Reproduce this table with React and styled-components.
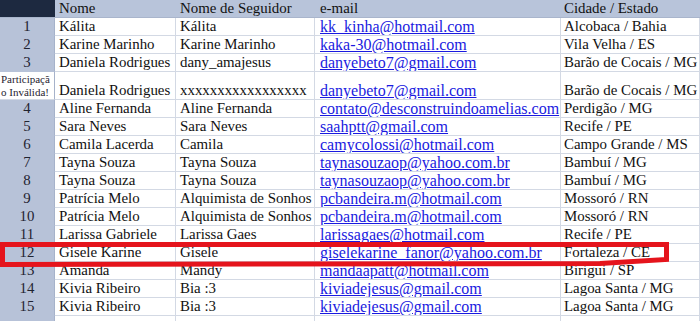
import React from "react";
import styled, { createGlobalStyle } from "styled-components";

const GlobalStyle = createGlobalStyle`
  html, body { margin: 0; padding: 0; background: #ffffff; }
  body { font-family: "Liberation Serif", "DejaVu Serif", serif; }
`;

const Sheet = styled.div`
  position: relative;
  width: 700px;
  height: 321px;
  overflow: hidden;
  display: grid;
  grid-template-columns: 55px 121px 139px 246px 139px;
  grid-template-rows: 18px 18px 18px 18px 28px;
  grid-auto-rows: 18px;
  font-family: "Liberation Serif", "DejaVu Serif", serif;
  font-size: 14.9px;
  color: #111111;
  background: #ffffff;
`;

const Corner = styled.div`
  background: #1d2940;
  border-bottom: 1px solid #a9b5cc;
  box-sizing: border-box;
`;

const HeadCell = styled.div`
  background: #b8c4da;
  border-bottom: 1px solid #a9b5cc;
  box-sizing: border-box;
  display: flex;
  align-items: flex-end;
  padding: 0 0 0 ${(p) => p.$pad || 4}px;
  line-height: 17px;
  white-space: nowrap;
  overflow: hidden;
`;

const IndexCell = styled.div`
  background: ${(p) => (p.$note ? "#ffffff" : "#b7c2d8")};
  border-bottom: 1px solid ${(p) => (p.$note ? "#d3d9e4" : "#b7c2d8")};
  border-right: 1px solid #a6b2ca;
  box-sizing: border-box;
  display: flex;
  align-items: flex-end;
  justify-content: center;
  line-height: 17px;
  color: #1f2330;
  height: ${(p) => p.$h || 18}px;
`;

const Note = styled.div`
  font-size: 11px;
  line-height: 13px;
  text-align: left;
  width: 100%;
  padding: 0 0 0 1px;
  white-space: nowrap;
  overflow: hidden;
`;

const Cell = styled.div`
  border-bottom: 1px solid #d3d9e4;
  border-right: 1px solid #d3d9e4;
  box-sizing: border-box;
  display: flex;
  align-items: flex-end;
  padding-left: ${(p) => p.$pad || 4}px;
  line-height: 17px;
  white-space: nowrap;
  overflow: hidden;
  height: ${(p) => p.$h || 18}px;
`;

const Link = styled.span`
  color: #1a1ae0;
  font-size: 16px;
  text-decoration: underline;
  text-underline-offset: 1px;
`;

const Highlight = styled.svg`
  position: absolute;
  left: 0;
  top: 0;
  width: 700px;
  height: 321px;
  pointer-events: none;
`;

const rows = [
  ["1", "Kálita", "Kálita", "kk_kinha@hotmail.com", "Alcobaca / Bahia"],
  ["2", "Karine Marinho", "Karine Marinho", "kaka-30@hotmail.com", "Vila Velha / ES"],
  ["3", "Daniela Rodrigues", "dany_amajesus", "danyebeto7@gmail.com", "Barão de Cocais / MG"],
  ["note", "Daniela Rodrigues", "xxxxxxxxxxxxxxxxx", "danyebeto7@gmail.com", "Barão de Cocais / MG"],
  ["4", "Aline Fernanda", "Aline Fernanda", "contato@desconstruindoamelias.com", "Perdigão / MG"],
  ["5", "Sara Neves", "Sara Neves", "saahptt@gmail.com", "Recife / PE"],
  ["6", "Camila Lacerda", "Camila", "camycolossi@hotmail.com", "Campo Grande / MS"],
  ["7", "Tayna Souza", "Tayna Souza", "taynasouzaop@yahoo.com.br", "Bambuí / MG"],
  ["8", "Tayna Souza", "Tayna Souza", "taynasouzaop@yahoo.com.br", "Bambuí / MG"],
  ["9", "Patrícia Melo", "Alquimista de Sonhos", "pcbandeira.m@hotmail.com", "Mossoró / RN"],
  ["10", "Patrícia Melo", "Alquimista de Sonhos", "pcbandeira.m@hotmail.com", "Mossoró / RN"],
  ["11", "Larissa Gabriele", "Larissa Gaes", "larissagaes@hotmail.com", "Recife / PE"],
  ["12", "Gisele Karine", "Gisele", "giselekarine_fanor@yahoo.com.br", "Fortaleza / CE"],
  ["13", "Amanda", "Mandy", "mandaapatt@hotmail.com", "Birigui / SP"],
  ["14", "Kivia Ribeiro", "Bia :3", "kiviadejesus@gmail.com", "Lagoa Santa / MG"],
  ["15", "Kivia Ribeiro", "Bia :3", "kiviadejesus@gmail.com", "Lagoa Santa / MG"],
  ["", "", "", "", ""],
];

const Row = ({ r }) => {
  const note = r[0] === "note";
  const h = note ? 28 : 18;
  return (
    <>
      <IndexCell $note={note} $h={h}>
        {note ? (
          <Note>
            Participaçã
            <br />o Inválida!
          </Note>
        ) : (
          r[0]
        )}
      </IndexCell>
      <Cell $h={h}>{r[1]}</Cell>
      <Cell $h={h}>{r[2]}</Cell>
      <Cell $h={h} $pad={5}>{r[3] && <Link>{r[3]}</Link>}</Cell>
      <Cell $h={h} $pad={3}>{r[4]}</Cell>
    </>
  );
};

export default function App() {
  return (
    <>
      <GlobalStyle />
      <Sheet>
        <Corner />
        <HeadCell>Nome</HeadCell>
        <HeadCell>Nome de Seguidor</HeadCell>
        <HeadCell $pad={5}>e-mail</HeadCell>
        <HeadCell $pad={3}>Cidade / Estado</HeadCell>
        {rows.map((r, i) => (
          <Row key={i} r={r} />
        ))}
        <Highlight viewBox="0 0 700 321">
          <path
            d="M2.5 244.5 H666.5 V259.5 L600 263.5 L2.5 264.5 Z"
            fill="none"
            stroke="#e5141c"
            strokeWidth="5"
            strokeLinejoin="miter"
          />
        </Highlight>
      </Sheet>
    </>
  );
}
